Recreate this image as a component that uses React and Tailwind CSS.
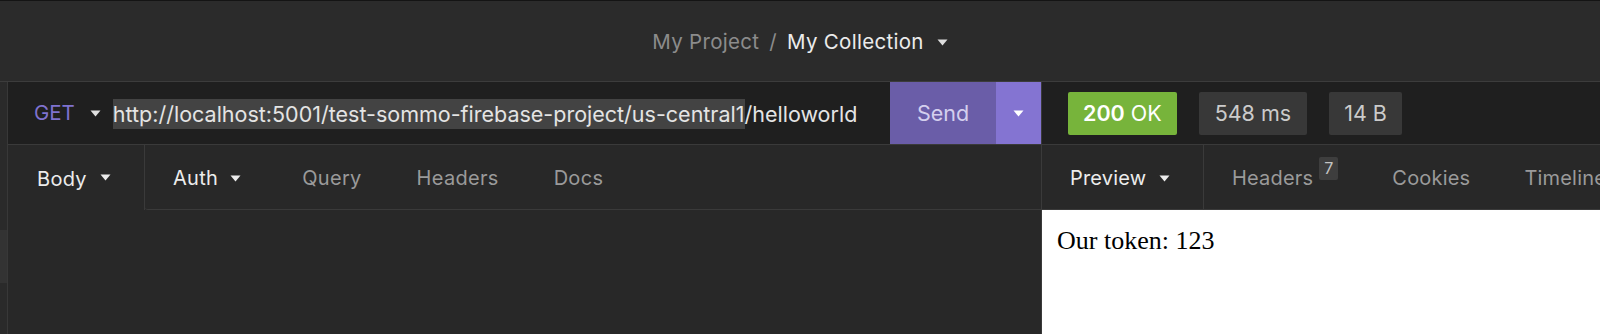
import { useState } from "react"

function Caret({ className = "" }) {
  return (
    <svg viewBox="0 0 10 7" className={`w-[11px] h-[7px] ${className}`} aria-hidden="true">
      <path d="M0 0.5 L10 0.5 L5 6.5 Z" fill="currentColor" />
    </svg>
  )
}

const requestTabs = [
  { name: "Query", gap: "mr-[55px]" },
  { name: "Headers", gap: "mr-[55px]" },
  { name: "Docs", gap: "" },
]

const responseTabs = [
  { name: "Headers", count: 7 },
  { name: "Cookies" },
  { name: "Timeline" },
]

export default function App() {
  const [url] = useState("http://localhost:5001/test-sommo-firebase-project/us-central1")

  return (
    <div className="w-[1600px] h-[334px] overflow-hidden flex flex-col bg-[#282828] font-['Inter','Noto_Sans',sans-serif] text-[20px] antialiased">
      <div className="h-px bg-[#141414]" />

      {/* breadcrumb header */}
      <header className="h-[81px] shrink-0 flex items-center justify-center pt-[2px] bg-[#2b2b2b] border-b border-[#3c3c3c] text-[20.5px] tracking-[0.3px]">
        <span className="text-[#8c8c8c]">My Project</span>
        <span className="text-[#8c8c8c] mx-[10px]">/</span>
        <span className="text-[#ececec]">My Collection</span>
        <Caret className="ml-[13px] text-[#dedede]" />
      </header>

      <div className="flex flex-1 min-h-0">
        {/* collapsed sidebar strip */}
        <div className="w-[8px] shrink-0 flex flex-col bg-[#2a2a2a] border-r border-[#383838]">
          <div className="h-[148px]" />
          <div className="h-[53px] bg-[#333333]" />
        </div>

        {/* request pane */}
        <div className="w-[1033px] shrink-0 flex flex-col">
          <div className="h-[63px] shrink-0 flex items-stretch bg-[#1f1f1f] border-b border-[#3a3a3a] pt-px">
            <div className="flex items-center pl-[26px]">
              <span className="text-[#7f72cf] text-[20.5px]">GET</span>
              <Caret className="ml-[15px] text-[#e0e0e0]" />
            </div>
            <div className="flex-1 flex items-center ml-[12px] text-[#e4e4e4] text-[21.5px] whitespace-nowrap overflow-hidden">
              <span className="bg-[#434343] leading-[30px]">{url}</span>
              <span className="leading-[30px]">/helloworld</span>
            </div>
            <button className="w-[106px] -mt-px bg-[#6a5da8] text-[#d4cfee] text-[21.5px] flex items-center justify-center">Send</button>
            <button className="w-[45px] -mt-px bg-[#8474d2] text-white flex items-center justify-center">
              <Caret />
            </button>
          </div>

          <div className="h-[65px] shrink-0 flex pt-[2px]">
            <div className="w-[137px] -mt-[2px] flex items-center pl-[29px] border-r border-[#3a3a3a] text-[#ececec] tracking-[0.3px]">
              <span className="pt-[2px]">Body</span>
              <Caret className="ml-[13px]" />
            </div>
            <div className="flex-1 -mt-[2px] pt-[2px] flex items-center border-b border-[#3a3a3a] rounded-bl-[3px] tracking-[0.3px]">
              <div className="flex items-center pl-[28px] mr-[61px] text-[#ececec]">
                <span>Auth</span>
                <Caret className="ml-[12px]" />
              </div>
              {requestTabs.map((tab) => (
                <span key={tab.name} className={`text-[#9a9a9a] ${tab.gap}`}>
                  {tab.name}
                </span>
              ))}
            </div>
          </div>
          <div className="flex-1" />
        </div>

        {/* response pane */}
        <div className="flex-1 flex flex-col border-l border-[#3a3a3a] min-w-0">
          <div className="h-[63px] shrink-0 flex items-center gap-[22px] pl-[26px] bg-[#1f1f1f] border-b border-[#3a3a3a] text-[21.5px]">
            <div className="h-[43px] px-[15px] flex items-center rounded-[2px] bg-[#77b43b] text-white">
              <span className="font-semibold">200</span>
              <span className="ml-[6px]">OK</span>
            </div>
            <div className="h-[43px] px-[16px] flex items-center rounded-[2px] bg-[#383838] text-[#cbcbcb]">548 ms</div>
            <div className="h-[43px] px-[15px] flex items-center rounded-[2px] bg-[#383838] text-[#cbcbcb]">14 B</div>
          </div>

          <div className="h-[65px] shrink-0 flex items-stretch pt-[2px] border-b border-[#3a3a3a] whitespace-nowrap tracking-[0.2px]">
            <div className="w-[162px] -mt-[2px] pt-[2px] shrink-0 flex items-center pl-[28px] border-r border-[#3a3a3a] text-[#ececec]">
              <span>Preview</span>
              <Caret className="ml-[13px]" />
            </div>
            <div className="flex items-center pl-[28px] text-[#9a9a9a]">
              {responseTabs.map((tab) => (
                <div key={tab.name} className="flex items-center mr-[54px]">
                  <span>{tab.name}</span>
                  {tab.count && (
                    <span className="ml-[6px] -translate-y-[10px] h-[23px] w-[19px] flex items-center justify-center rounded-[2px] bg-[#3e3e3e] text-[#c4c4c4] text-[16px]">
                      {tab.count}
                    </span>
                  )}
                </div>
              ))}
            </div>
          </div>

          <div className="flex-1 bg-white pl-[15px] pt-[16px]">
            <p className="font-['Liberation_Serif','Times_New_Roman',serif] text-[26px] leading-[30px] text-black">Our token: 123</p>
          </div>
        </div>
      </div>
    </div>
  )
}
